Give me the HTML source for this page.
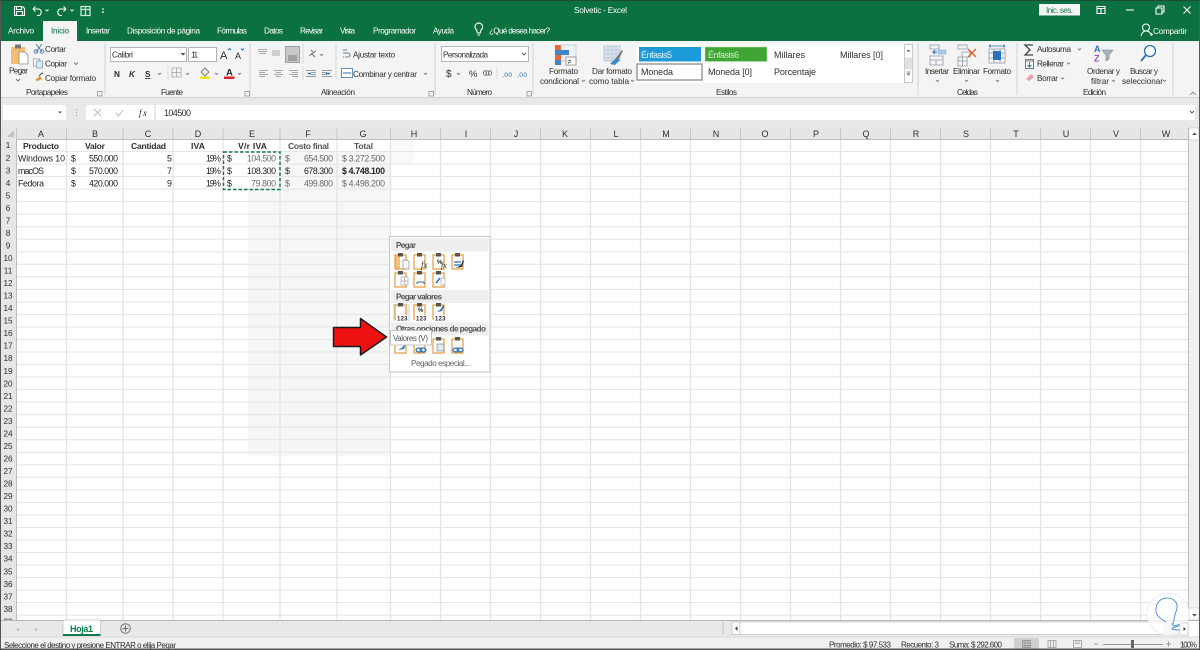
<!DOCTYPE html>
<html lang="es"><head><meta charset="utf-8"><title>Solvetic - Excel</title>
<style>
html,body{margin:0;padding:0;background:#fff;width:1200px;height:650px;overflow:hidden}
svg{display:block;filter:blur(.3px)}
text{font-family:"Liberation Sans",sans-serif;font-size:8.2px;fill:#2e2e2e}
.w text,text.w{fill:#fff}
.c text{font-size:8.8px;fill:#222}
.mid text{text-anchor:middle}
</style></head><body>
<svg width="1200" height="650" viewBox="0 0 1200 650" xmlns="http://www.w3.org/2000/svg">
<defs>
<g id="cb"><rect x="-6" y="-7" width="11" height="14" fill="#fff" stroke="#e39a3b" stroke-width="1.2"/><rect x="-3" y="-9" width="5" height="3.5" fill="#555"/></g>
<g id="cbf"><rect x="-6" y="-7" width="5" height="14" fill="#f5c27e"/><rect x="-6" y="-7" width="11" height="14" fill="none" stroke="#e39a3b" stroke-width="1.2"/><rect x="-3" y="-9" width="5" height="3.5" fill="#555"/></g>
</defs>

<!-- base -->
<rect width="1200" height="650" fill="#fff"/>

<!-- title bar -->
<rect width="1200" height="41" fill="#0b7140"/>
<rect width="1200" height="1" fill="#1e4a36"/>
<g fill="none" stroke="#fff" stroke-width="1.1">
<path d="M14.5 6.5h8l2 2v7h-10zM16.5 6.5v3h5v-3M16.5 15.5v-4h6v4"/>
<path d="M33 9h6a3.5 3.5 0 0 1 0 6.5h-2M33 9l2.500-2.500M33 9l2.500 2.500"/>
<path d="M66 9h-6a3.500 3.500 0 0 0 0 6.500h2M66 9l-2.500-2.500M66 9l-2.500 2.500"/>
<path d="M81 6.500h9v9h-9zM81 9.500h9M85.500 6.500v9" stroke="#cfe7da" stroke-width="1.3"/>
<path d="M45.500 9.500l1.500 1.500 1.500-1.500M70.500 9.500l1.500 1.500 1.500-1.500M102 9h2" stroke-width=".9"/>
<path d="M102 11.500l1 1 1-1" stroke-width=".9"/>
<path d="M1097 6.500h8v7h-8zM1097 8.500h8M1101 8.500v5"/>
<path d="M1126 10h8"/>
<path d="M1156 8h6v6h-6zM1158 8v-2h6v6h-2"/>
<path d="M1183.500 6.500l7 7M1190.500 6.500l-7 7"/>
<circle cx="1146" cy="27.500" r="3.500"/>
<path d="M1141 36c.5-3 2.500-5 5-5s4 1.500 5 3M1150 34.500h3M1151.500 33v3"/>
<path d="M475 27a3.800 3.800 0 1 1 6 3l-.8 3h-2.800l-.8-3a4 4 0 0 1-1.600-3zM477.500 35h2.500"/>
</g>
<text class="w" x="574" y="13" textLength="53">Solvetic  -  Excel</text>
<rect x="1039" y="4" width="41" height="11.500" fill="#f4f6f5"/>
<text x="1046" y="13" textLength="27" style="fill:#2c7a55">Inic. ses.</text>
<text class="w" x="1153" y="34" textLength="34">Compartir</text>

<!-- tabs -->
<rect x="43" y="21" width="34" height="20" fill="#f4f4f4"/>
<g class="w">
<text x="8" y="33.500" textLength="26">Archivo</text>
<text x="86" y="33.500" textLength="24">Insertar</text>
<text x="127" y="33.500" textLength="73">Disposición de página</text>
<text x="217" y="33.500" textLength="30">Fórmulas</text>
<text x="264" y="33.500" textLength="19">Datos</text>
<text x="300" y="33.500" textLength="23">Revisar</text>
<text x="340" y="33.500" textLength="15">Vista</text>
<text x="373" y="33.500" textLength="43">Programador</text>
<text x="433" y="33.500" textLength="21">Ayuda</text>
<text x="489" y="33.500" textLength="61">¿Qué desea hacer?</text>
</g>
<text x="51" y="33.500" textLength="18" style="fill:#0b7140">Inicio</text>

<!-- ribbon -->
<rect y="41" width="1200" height="57" fill="#f4f4f4"/>
<rect y="97" width="1200" height="1" fill="#d4d4d4"/>
<path d="M105 43v52M250 43v52M435 43v52M533 43v52M918 43v52M1017 43v52M1173 43v52" stroke="#d2d2d2" stroke-width="1" fill="none"/>

<!-- clipboard group -->
<rect x="11" y="47" width="14" height="17" fill="#f5bd72"/><rect x="15" y="44.500" width="6" height="4" fill="#777"/>
<path d="M19 52h6l3 3v9h-9z" fill="#fff" stroke="#888" stroke-width=".8"/>
<text x="9" y="73.500" textLength="19">Pegar</text>
<path d="M16 79l2 2 2-2" fill="none" stroke="#555" stroke-width=".8"/>
<path d="M36 44l6 8M42 44l-6 8" stroke="#5a7a9a" stroke-width="1"/><circle cx="36" cy="51.500" r="1.800" fill="none" stroke="#5a8ab5"/><circle cx="42" cy="51.500" r="1.800" fill="none" stroke="#5a8ab5"/>
<rect x="33.500" y="59" width="6" height="7" fill="#fff" stroke="#88a" stroke-width=".7"/><rect x="36.500" y="61" width="6" height="7" fill="#dce8f2" stroke="#79a" stroke-width=".7"/>
<path d="M35 80l5-4 2 3-4 2z" fill="#d99a3a"/><path d="M39 76l3-3 1 1" stroke="#555" fill="none"/>
<text x="45" y="52" textLength="21">Cortar</text>
<text x="45" y="66.500" textLength="22">Copiar</text>
<text x="45" y="81" textLength="51">Copiar formato</text>
<path d="M74 62.500l2 2 2-2" fill="none" stroke="#555" stroke-width=".8"/>
<text x="26" y="95" textLength="42">Portapapeles</text>

<!-- font group -->
<rect x="110.500" y="47.500" width="76" height="14" fill="#fff" stroke="#b5b5b5"/>
<text x="112" y="57.500" textLength="21">Calibri</text>
<path d="M181 53l2 2 2-2M210 53l2 2 2-2" fill="#555" stroke="#555" stroke-width=".8"/>
<rect x="188.500" y="47.500" width="28" height="14" fill="#fff" stroke="#b5b5b5"/>
<text x="191" y="57.500" textLength="7">11</text>
<text x="220" y="59" style="font-size:11px" textLength="8">A</text>
<text x="235" y="59" style="font-size:9px" textLength="6">A</text>
<path d="M228 50l1.500-1.500 1.500 1.500M241 48.500l1.500 1.500 1.500-1.500" stroke="#2a6fb0" fill="none"/>
<text x="114" y="77" textLength="6" style="font-weight:bold">N</text>
<text x="129" y="77" textLength="5" style="font-weight:bold;font-style:italic">K</text>
<text x="145" y="77" textLength="5" style="font-weight:bold;text-decoration:underline">S</text>
<rect x="172" y="68" width="9" height="9" fill="none" stroke="#b4b4b4"/><path d="M172 72.500h9M176.500 68v9" stroke="#b4b4b4"/>
<path d="M158 73l1.500 1.500 1.500-1.500M186 73l1.500 1.500 1.500-1.500M215 73l1.500 1.500 1.500-1.500M238 73l1.500 1.500 1.500-1.500" fill="none" stroke="#666" stroke-width=".8"/>
<path d="M201 72l4-4 4 4-4 4z" fill="#eee" stroke="#667" stroke-width=".8"/>
<rect x="200" y="76.500" width="10" height="2.500" fill="#f5e21a"/>
<text x="226" y="75.500" style="font-size:9.500px;font-weight:bold" textLength="7">A</text>
<rect x="224" y="76.500" width="10.500" height="2.500" fill="#d8232a"/>
<path d="M168 66v14" stroke="#dcdcdc"/>
<text x="161" y="95" textLength="22">Fuente</text>

<!-- alignment -->
<g stroke="#a8a8a8" stroke-width="1" fill="none">
<path d="M258 49.500h9M258 51.500h9M259 53.500h7M272 51h8M272 53h8M272 55h8"/>
<path d="M259 70.500h9M259 72.500h6M259 74.500h9M259 76.500h6M274 70.500h9M276 72.500h5M274 74.500h9M276 76.500h5M289 70.500h9M292 72.500h6M289 74.500h9M292 76.500h6"/>
</g>
<rect x="285.500" y="46.500" width="14" height="16" fill="#c8c8c8" stroke="#a0a0a0"/>
<path d="M288 56h9M288 58h9M288 60h9" stroke="#777" fill="none"/>
<path d="M303 44v20M303 66v14" stroke="#d8d8d8"/>
<path d="M309 56l7-5M311 50l3 3M311 53l4 4" stroke="#777" fill="none"/>
<path d="M320 54l1.500 1.500 1.500-1.500M424 73l1.500 1.500 1.500-1.500" fill="none" stroke="#666" stroke-width=".8"/>
<path d="M306 70.500h10M311 72.500h5M311 74.500h5M306 76.500h10M322 70.500h10M322 72.500h5M322 74.500h5M322 76.500h10" stroke="#9a9a9a" fill="none"/>
<path d="M311 73.500h-3M326 73.500h4" stroke="#2a6fb0" stroke-width="1.500" fill="none"/>
<path d="M336 44v36" stroke="#d8d8d8"/>
<path d="M343 50h4M343 53h5a2 2 0 0 1 0 4h-3M343 57h1" stroke="#6a7f95" fill="none"/>
<text x="353" y="57.500" textLength="42">Ajustar texto</text>
<rect x="341.500" y="68.500" width="11" height="9" fill="#fff" stroke="#6a8fb0"/><path d="M343 73h8" stroke="#2a6fb0"/>
<text x="353" y="77" textLength="64">Combinar y centrar</text>
<text x="321" y="95" textLength="34">Alineación</text>

<!-- dialog launchers -->
<g fill="none" stroke="#8a8a8a" stroke-width=".7">
<path d="M97.500 91.500h4.500v4.500h-4.500zM245 91.500h4.500v4.500h-4.500zM429 91.500h4.500v4.500h-4.500zM527 91.500h4.500v4.500h-4.500z"/>
</g>

<!-- number -->
<rect x="441.500" y="46.500" width="87" height="15" fill="#fff" stroke="#b5b5b5"/>
<text x="443" y="57.500" textLength="45">Personalizada</text>
<path d="M522 53l2 2 2-2" fill="none" stroke="#555" stroke-width=".9"/>
<text x="446" y="77" style="font-size:10px" textLength="6">$</text>
<path d="M457 73l1.500 1.500 1.500-1.500" fill="none" stroke="#666" stroke-width=".8"/>
<text x="469" y="77" style="font-size:9.500px" textLength="9">%</text>
<text x="483" y="75.500" style="font-size:7px" textLength="9">000</text>
<path d="M497 67v12" stroke="#d8d8d8"/>
<text x="502" y="77" style="font-size:6.500px;fill:#2a6fb0" textLength="10">,00</text>
<text x="517" y="77" style="font-size:6.500px;fill:#2a6fb0" textLength="10">,00</text>
<text x="467" y="95" textLength="25">Número</text>

<!-- styles -->
<rect x="555" y="45" width="6" height="5" fill="#e8663c"/><rect x="561" y="45" width="15" height="16" fill="#eef1f4" stroke="#b5bcc4" stroke-width=".6"/>
<rect x="555" y="50" width="6" height="5" fill="#3f86c6"/><rect x="561" y="50" width="8" height="5" fill="#3f86c6"/><rect x="555" y="55" width="6" height="5" fill="#e8663c"/><rect x="555" y="60" width="6" height="5" fill="#3f86c6"/>
<rect x="566" y="57" width="10" height="8" fill="#fff" stroke="#777" stroke-width=".7"/>
<text x="567.500" y="64" style="font-size:7px" textLength="6">≠</text>
<rect x="604" y="46" width="16" height="15" fill="#dbe5f1" stroke="#a8b4c2" stroke-width=".7"/>
<path d="M604 50h16M604 54h16M604 58h16M608 46v15M612 46v15M616 46v15" stroke="#a8b4c2" stroke-width=".5"/>
<path d="M610 64l6-6 4 2-5 5z" fill="#3f86c6"/><path d="M616 58l6-8 1 1-5 9z" fill="#777"/>
<text x="549" y="74" textLength="29">Formato</text>
<text x="540" y="84" textLength="39">condicional</text>
<text x="592" y="74" textLength="40">Dar formato</text>
<text x="589" y="84" textLength="40">como tabla</text>
<path d="M582 80l1.500 1.500 1.500-1.500M631 80l1.500 1.500 1.500-1.500" fill="none" stroke="#666" stroke-width=".8"/>
<rect x="636" y="44" width="268" height="39" fill="#fff"/>
<rect x="639" y="47" width="62" height="14.500" fill="#1c9bd8"/>
<text x="641" y="58" textLength="31" style="fill:#e6f4fb;font-size:9px">Énfasis5</text>
<rect x="705" y="47" width="62" height="14.500" fill="#3fa535" stroke="#b8dcb2" stroke-width=".6"/>
<text x="708" y="58" textLength="31" style="fill:#d3ecd0;font-size:9px">Énfasis6</text>
<rect x="637" y="64" width="65" height="16" fill="#fff" stroke="#9c9c9c" stroke-width="1.500"/>
<text x="641" y="75" textLength="32" style="font-size:9px">Moneda</text>
<text x="708" y="75" textLength="44" style="font-size:9px">Moneda [0]</text>
<text x="774" y="58" textLength="31" style="font-size:9px">Millares</text>
<text x="774" y="75" textLength="42" style="font-size:9px">Porcentaje</text>
<text x="840" y="58" textLength="43" style="font-size:9px">Millares [0]</text>
<rect x="904.500" y="44.500" width="8" height="38" fill="#fff" stroke="#c8c8c8"/>
<rect x="905" y="57.500" width="7" height="12" fill="#e0e0e0"/>
<path d="M906.500 51.500l2-2 2 2zM906.500 73.500h4l-2 2z" fill="#555"/><path d="M906.500 72h4" stroke="#555" stroke-width=".7"/>
<text x="716" y="95" textLength="21">Estilos</text>

<!-- cells -->
<g fill="none" stroke="#8a99a8" stroke-width=".8">
<path d="M930 45h9v4h-9zM930 56h13v4h-13zM936 60v5M930 60v5h13v-5"/>
<path d="M958 45h9v4h-9zM962 52h8v5h-8zM958 57h9v4h-9zM958 61v5h9v-5M962.500 57v9"/>
<path d="M989 49h16v14h-16zM989 53h16M989 58h16M994 49v14M1000 49v14"/>
</g>
<path d="M937 52h-4l2-2M933 52l2 2" stroke="#2a6fb0" fill="none"/><rect x="938" y="50" width="8" height="4" fill="#aecbe6" stroke="#7ea3c5" stroke-width=".5"/>
<path d="M968 49l8 8M976 49l-8 8" stroke="#e8562a" stroke-width="1.300"/>
<rect x="993" y="51" width="8" height="9" fill="#2a72b8"/>
<path d="M989 46h16M989 46l1.500-1.500M989 46l1.500 1.500M1005 46l-1.500-1.500M1005 46l-1.500 1.500" stroke="#2a6fb0" fill="none" stroke-width=".8"/>
<text x="925" y="74" textLength="24">Insertar</text>
<text x="953" y="74" textLength="27">Eliminar</text>
<text x="983" y="74" textLength="28">Formato</text>
<path d="M936 80l1.500 1.500 1.500-1.500M965 80l1.500 1.500 1.500-1.500M996 80l1.500 1.500 1.500-1.500" fill="none" stroke="#666" stroke-width=".8"/>
<text x="957" y="95" textLength="21">Celdas</text>

<!-- edit -->
<path d="M1033 45h-8l5 5-5 5h8" fill="none" stroke="#444" stroke-width="1.300"/>
<rect x="1025.500" y="59.500" width="8" height="9" fill="#fff" stroke="#777"/><path d="M1025 61h9" stroke="#777"/><path d="M1029.500 62v5M1027.500 65l2 2 2-2" stroke="#2a6fb0" fill="none"/>
<path d="M1026 79l5-5 3 3-5 4z" fill="#f09aa8"/>
<text x="1037" y="52" textLength="34">Autosuma</text>
<text x="1037" y="66.500" textLength="27">Rellenar</text>
<text x="1037" y="81" textLength="21">Borrar</text>
<path d="M1078 48.500l1.500 1.500 1.500-1.500M1067 62.500l1.500 1.500 1.500-1.500M1061 77.500l1.500 1.500 1.500-1.500" fill="none" stroke="#666" stroke-width=".8"/>
<text x="1094" y="52" style="font-size:9px;fill:#2a72b8;font-weight:bold" textLength="7">A</text>
<text x="1094" y="61.500" style="font-size:9px;fill:#9c4fc0;font-weight:bold" textLength="7">Z</text>
<path d="M1102 50h11l-4 5v4l-3 2v-6z" fill="#a9b4bd" stroke="#7a8792" stroke-width=".6"/>
<circle cx="1150" cy="51" r="5.500" fill="#fff" stroke="#2a72b8" stroke-width="1.300"/><path d="M1146 55l-5 6" stroke="#2a72b8" stroke-width="1.800"/>
<text x="1087" y="74" textLength="33">Ordenar y</text>
<text x="1091" y="84" textLength="18">filtrar</text>
<text x="1130" y="74" textLength="28">Buscar y</text>
<text x="1122" y="84" textLength="41">seleccionar</text>
<path d="M1112 80l1.500 1.500 1.500-1.500M1163 80l1.500 1.500 1.500-1.500" fill="none" stroke="#666" stroke-width=".8"/>
<text x="1083" y="95" textLength="23">Edición</text>
<path d="M1190 95l3-3 3 3" fill="none" stroke="#777" stroke-width=".8"/>

<!-- formula bar -->
<rect y="98" width="1200" height="30" fill="#e8e8e8"/>
<rect x="3" y="105" width="63" height="15" fill="#fff"/>
<path d="M58 111.500l2 2 2-2z" fill="#555"/>
<path d="M76.500 109v1M76.500 112v1M76.500 115v1" stroke="#999"/>
<rect x="86" y="105" width="68" height="15" fill="#fff"/>
<path d="M94 109l7 7M101 109l-7 7" stroke="#bbb"/>
<path d="M116 113l2.500 3 4.500-6" fill="none" stroke="#bbb"/>
<text x="139" y="116" style="font-family:'Liberation Serif',serif;font-style:italic;font-size:9px" textLength="8">fx</text>
<rect x="156" y="105" width="1039" height="15" fill="#fff"/>
<text x="164" y="116" textLength="27" style="font-size:9px">104500</text>
<path d="M1190 111l2 2 2-2" fill="none" stroke="#555"/>

<!-- sheet -->
<rect x="0" y="128" width="1188" height="11" fill="#e6e6e6"/>
<rect x="0" y="128" width="16" height="492" fill="#e6e6e6"/>
<path d="M14 130v7h-7z" fill="#c2c2c2"/>
<!-- paste preview shade -->
<rect x="248" y="190" width="142" height="266" fill="#f5f7f7"/>
<rect x="280" y="151" width="110" height="40" fill="#f5f7f7"/>
<rect x="390" y="139" width="24" height="25" fill="#f8f9f9"/>
<!-- grid -->
<path fill="none" stroke="#e6e6e6" stroke-width="1.100" d="M16 151.500H1188M16 164.100H1188M16 176.600H1188M16 189.100H1188M16 201.600H1188M16 214.200H1188M16 226.700H1188M16 239.200H1188M16 251.800H1188M16 264.300H1188M16 276.800H1188M16 289.400H1188M16 301.900H1188M16 314.400H1188M16 326.900H1188M16 339.500H1188M16 352H1188M16 364.500H1188M16 377.100H1188M16 389.600H1188M16 402.100H1188M16 414.700H1188M16 427.200H1188M16 439.700H1188M16 452.300H1188M16 464.800H1188M16 477.300H1188M16 489.800H1188M16 502.400H1188M16 514.900H1188M16 527.400H1188M16 540H1188M16 552.500H1188M16 565H1188M16 577.600H1188M16 590.100H1188M16 602.600H1188M16 615.200H1188"/>
<path fill="none" stroke="#e4e4e4" stroke-width="1.300" d="M66.500 139V620M123 139V620M173 139V620M223 139V620M280 139V620M337 139V620M390.500 139V620M440.500 139V620M490.500 139V620M540.500 139V620M590.500 139V620M640.500 139V620M690.500 139V620M740.500 139V620M790.500 139V620M840.500 139V620M890.500 139V620M940.500 139V620M990.500 139V620M1040.500 139V620M1090.500 139V620M1140.500 139V620"/>
<path fill="none" stroke="#c6c6c6" d="M16.500 128V139M66.500 128V139M123 128V139M173 128V139M223 128V139M280 128V139M337 128V139M390.500 128V139M440.500 128V139M490.500 128V139M540.500 128V139M590.500 128V139M640.500 128V139M690.500 128V139M740.500 128V139M790.500 128V139M840.500 128V139M890.500 128V139M940.500 128V139M990.500 128V139M1040.500 128V139M1090.500 128V139M1140.500 128V139"/>
<path d="M16 139.500H1188M16.500 139V620M1188.500 128V620" stroke="#bdbdbd" fill="none"/>

<!-- col headers -->
<g class="mid">
<text x="41" y="137" style="font-size:9px">A</text><text x="95" y="137" style="font-size:9px">B</text><text x="148" y="137" style="font-size:9px">C</text><text x="198" y="137" style="font-size:9px">D</text><text x="252" y="137" style="font-size:9px">E</text><text x="308" y="137" style="font-size:9px">F</text><text x="363" y="137" style="font-size:9px">G</text><text x="414" y="137" style="font-size:9px">H</text><text x="466" y="137" style="font-size:9px">I</text><text x="516" y="137" style="font-size:9px">J</text><text x="565" y="137" style="font-size:9px">K</text><text x="616" y="137" style="font-size:9px">L</text><text x="666" y="137" style="font-size:9px">M</text><text x="716" y="137" style="font-size:9px">N</text><text x="765" y="137" style="font-size:9px">O</text><text x="816" y="137" style="font-size:9px">P</text><text x="866" y="137" style="font-size:9px">Q</text><text x="916" y="137" style="font-size:9px">R</text><text x="966" y="137" style="font-size:9px">S</text><text x="1016" y="137" style="font-size:9px">T</text><text x="1066" y="137" style="font-size:9px">U</text><text x="1116" y="137" style="font-size:9px">V</text><text x="1166" y="137" style="font-size:9px">W</text>
</g>
<!-- row headers -->
<g class="mid">
<text x="8" y="148.200">1</text><text x="8" y="160.800">2</text><text x="8" y="173.300">3</text><text x="8" y="185.800">4</text><text x="8" y="198.300">5</text><text x="8" y="210.900">6</text><text x="8" y="223.400">7</text><text x="8" y="235.900">8</text><text x="8" y="248.500">9</text><text x="8" y="261">10</text><text x="8" y="273.500">11</text><text x="8" y="286.100">12</text><text x="8" y="298.600">13</text><text x="8" y="311.100">14</text><text x="8" y="323.600">15</text><text x="8" y="336.200">16</text><text x="8" y="348.700">17</text><text x="8" y="361.200">18</text><text x="8" y="373.800">19</text><text x="8" y="386.300">20</text><text x="8" y="398.800">21</text><text x="8" y="411.400">22</text><text x="8" y="423.900">23</text><text x="8" y="436.400">24</text><text x="8" y="449">25</text><text x="8" y="461.500">26</text><text x="8" y="474">27</text><text x="8" y="486.500">28</text><text x="8" y="499.100">29</text><text x="8" y="511.600">30</text><text x="8" y="524.100">31</text><text x="8" y="536.700">32</text><text x="8" y="549.200">33</text><text x="8" y="561.700">34</text><text x="8" y="574.300">35</text><text x="8" y="586.800">36</text><text x="8" y="599.300">37</text><text x="8" y="611.900">38</text><text x="8" y="624.400">39</text>
</g>

<!-- data -->
<text x="23" y="149" textLength="36" style="font-size:8.6px;font-weight:bold">Producto</text>
<text x="85" y="149" textLength="20" style="font-size:8.6px;font-weight:bold">Valor</text>
<text x="131" y="149" textLength="35" style="font-size:8.6px;font-weight:bold">Cantidad</text>
<text x="191" y="149" textLength="14" style="font-size:8.6px;font-weight:bold">IVA</text>
<text x="238" y="149" textLength="29" style="font-size:8.6px;font-weight:bold">V/r IVA</text>
<text x="288" y="149" textLength="41" style="font-size:8.6px;font-weight:bold;fill:#555">Costo final</text>
<text x="354" y="149" textLength="19" style="font-size:8.6px;font-weight:bold;fill:#555">Total</text>
<g class="c">
<text x="18" y="161.500" textLength="47">Windows 10</text><text x="71" y="161.500">$</text><text x="89" y="161.500" textLength="29">550.000</text><text x="167" y="161.500">5</text><text x="206" y="161.500" textLength="15">19%</text><text x="227" y="161.500">$</text>
<text x="18" y="174" textLength="26">macOS</text><text x="71" y="174">$</text><text x="89" y="174" textLength="29">570.000</text><text x="167" y="174">7</text><text x="206" y="174" textLength="15">19%</text><text x="227" y="174">$</text>
<text x="18" y="186.500" textLength="26">Fedora</text><text x="71" y="186.500">$</text><text x="89" y="186.500" textLength="29">420.000</text><text x="167" y="186.500">9</text><text x="206" y="186.500" textLength="15">19%</text><text x="227" y="186.500">$</text>
<text x="247" y="174" textLength="29">108.300</text><text x="285" y="174">$</text><text x="304" y="174" textLength="29">678.300</text><text x="342" y="174" textLength="43" style="font-weight:bold">$ 4.748.100</text>
</g>
<g class="c" style="opacity:.68">
<text x="247" y="161.500" textLength="29">104.500</text><text x="285" y="161.500">$</text><text x="304" y="161.500" textLength="29">654.500</text><text x="342" y="161.500" textLength="43">$ 3.272.500</text>
<text x="251" y="186.500" textLength="25">79.800</text><text x="285" y="186.500">$</text><text x="304" y="186.500" textLength="29">499.800</text><text x="342" y="186.500" textLength="43">$ 4.498.200</text>
</g>
<rect x="223.500" y="152" width="56.500" height="37.500" fill="none" stroke="#1a7a4c" stroke-width="1.500" stroke-dasharray="3.500 2"/>

<!-- vertical scrollbar -->
<rect x="1189" y="128" width="10" height="492" fill="#f0f0f0"/>
<rect x="1189" y="128" width="10" height="12" fill="#fff" stroke="#c0c0c0" stroke-width=".6"/>
<rect x="1189" y="608" width="10" height="12" fill="#fff" stroke="#c0c0c0" stroke-width=".6"/>
<path d="M1192 135l2.500-2.500 2.500 2.500zM1192 614h5l-2.500 2.500z" fill="#555"/>

<!-- tab bar -->
<rect y="620" width="1189" height="17" fill="#e8e8e8"/>
<rect y="620" width="1200" height="1" fill="#b5b5b5"/>
<rect x="63" y="620" width="37.500" height="15.500" fill="#fff" stroke="#b5b5b5" stroke-width=".6"/>
<rect x="63" y="634" width="37.500" height="2" fill="#0b7d4b"/>
<text x="70" y="632" textLength="23" style="font-weight:bold;font-size:9px;fill:#0b7d4b">Hoja1</text>
<path d="M19 628l-2 1.500 2 1.500M35 628l2 1.500-2 1.500" fill="#bbb" stroke="#bbb" stroke-width=".6"/>
<circle cx="125.500" cy="628.500" r="4.800" fill="none" stroke="#777"/><path d="M122.500 628.500h6M125.500 625.500v6" stroke="#666"/>
<rect x="722" y="622" width="2" height="12" fill="#d5d5d5"/>
<rect x="732" y="622" width="8" height="12.500" fill="#fff" stroke="#bdbdbd" stroke-width=".7"/>
<path d="M737.500 626v5l-2.500-2.500z" fill="#444"/>
<rect x="740" y="622" width="424" height="12.500" fill="#fff" stroke="#c4c4c4" stroke-width=".7"/>

<!-- status -->
<rect y="637" width="1200" height="11.500" fill="#f0f0f0"/>
<rect y="636.500" width="1200" height="1" fill="#dadada"/>
<text x="4" y="648" textLength="172" style="font-size:8px">Seleccione el destino y presione ENTRAR o elija Pegar</text>
<text x="829" y="647.500" textLength="62" style="font-size:8px">Promedio:  $ 97.533</text>
<text x="901" y="647.500" textLength="38" style="font-size:8px">Recuento: 3</text>
<text x="949" y="647.500" textLength="53" style="font-size:8px">Suma:  $ 292.600</text>
<rect x="1014" y="638" width="25" height="11" fill="#d0d0d0"/>
<path d="M1022.500 640.500h8v7h-8zM1022.500 643h8M1022.500 645.500h8M1025 640.500v7M1028 640.500v7" fill="none" stroke="#888" stroke-width=".7"/>
<path d="M1048 640.500h8v7h-8zM1050.500 640.500v7M1053.500 640.500v7M1073.500 640.500h8v7h-8zM1076 640.500v3h3v-3" fill="none" stroke="#999" stroke-width=".8"/>
<path d="M1094 644h4M1103 644.500h60M1166 644h5M1168.500 641.500v5" stroke="#999" fill="none"/>
<rect x="1131" y="640" width="3" height="8" fill="#666"/>
<text x="1180" y="647.500" textLength="17" style="font-size:8px">100%</text>

<!-- doodle, on top of the grid and scrollbars -->
<circle cx="1168" cy="614" r="21" fill="#fff" fill-opacity=".75" stroke="#e9eff5"/>
<path d="M1166 622c-5-3-11-6-10-14 1-7 6-10 11-10 7 0 11 5 10 10-1 5-3 8-3 12-1 3 0 4-2 4l2 2c3-1 5-2 6-1-2 2-8 2-8 4 2 1 6 1 9 1" fill="none" stroke="#5a95c8" stroke-width="1"/>
<rect x="1180" y="623" width="8" height="12" fill="#fff" stroke="#c8c8c8" stroke-width=".6"/>
<path d="M1183.500 627v4l2.500-2z" fill="#444"/>

<!-- frame -->
<rect y="648.500" width="1200" height="1.500" fill="#555"/>
<rect width="1" height="650" fill="#555"/>
<rect x="1199" width="1" height="650" fill="#555"/>

<!-- context menu -->
<rect x="389.500" y="236.500" width="100.500" height="135.500" fill="#fff" stroke="#c6c6c6"/>
<rect x="391" y="238.500" width="97.500" height="13" fill="#eeeeee"/>
<text x="396" y="248" textLength="20" style="font-weight:bold;fill:#555">Pegar</text>
<rect x="391" y="290" width="97.500" height="13" fill="#eeeeee"/>
<text x="396" y="299.500" textLength="46" style="font-weight:bold;fill:#555">Pegar valores</text>
<rect x="391" y="322.500" width="97.500" height="13" fill="#eeeeee"/>
<text x="396" y="331.500" textLength="90" style="font-weight:bold;fill:#555">Otras opciones de pegado</text>

<use href="#cbf" x="401" y="262"/><path d="M403 260h4l2 2v7h-6z" fill="#fff" stroke="#888" stroke-width=".7"/>
<use href="#cb" x="420" y="262"/><text x="421" y="268" style="font-family:'Liberation Serif',serif;font-style:italic;font-size:9px">fx</text>
<use href="#cb" x="439" y="262"/><text x="437" y="264" style="font-size:6px;font-weight:bold">%</text><text x="441" y="268" style="font-family:'Liberation Serif',serif;font-style:italic;font-size:8px">fx</text>
<use href="#cb" x="458" y="262"/><path d="M454 262h7M454 265h7" stroke="#4a86c0" stroke-width="1.500"/><path d="M456 268l5-3 2-5 1 1-2 6z" fill="#333"/>
<use href="#cb" x="401" y="280"/><path d="M401 277h7v8h-7zM404.500 277v8M401 281h7" fill="#fff" stroke="#aaa" stroke-width=".7"/>
<use href="#cb" x="420" y="280"/><path d="M417 282h7M417 282v2M424 282v2" stroke="#2a6fb0" fill="none"/>
<use href="#cb" x="439" y="280"/><path d="M436 283l4-5" stroke="#2a6fb0" stroke-width="1.500"/><rect x="441" y="278" width="4" height="7" fill="#fff" stroke="#999" stroke-width=".6"/>

<rect x="393" y="304" width="17" height="17" fill="#e7e7e7"/>
<use href="#cb" x="401" y="312"/><use href="#cb" x="420" y="312"/><use href="#cb" x="439" y="312"/>
<text x="418" y="312" style="font-size:6px;font-weight:bold">%</text>
<path d="M437 312l4-3 2-4 1 1-2 5z" fill="#2a6fb0"/>
<rect x="396" y="315" width="12" height="6" fill="#fff"/><rect x="415" y="315" width="12" height="6" fill="#fff"/><rect x="434" y="315" width="12" height="6" fill="#fff"/>
<text x="397" y="320.500" textLength="10.500" style="font-size:6px;font-weight:bold">123</text>
<text x="416" y="320.500" textLength="10.500" style="font-size:6px;font-weight:bold">123</text>
<text x="435" y="320.500" textLength="10.500" style="font-size:6px;font-weight:bold">123</text>

<use href="#cb" x="401" y="346"/><use href="#cb" x="420" y="346"/><use href="#cb" x="439" y="346"/><use href="#cb" x="458" y="346"/>
<path d="M398 350l5-3 2-4 1 1-2 5z" fill="#2a6fb0"/>
<ellipse cx="419" cy="350" rx="3" ry="2" fill="none" stroke="#2a6fb0" stroke-width="1.200"/><ellipse cx="423" cy="350" rx="3" ry="2" fill="none" stroke="#2a6fb0" stroke-width="1.200"/>
<rect x="437" y="344" width="7" height="7" fill="#dfe8f0" stroke="#777" stroke-width=".6"/>
<ellipse cx="456" cy="350" rx="3" ry="2" fill="none" stroke="#2a6fb0" stroke-width="1.200"/><ellipse cx="460" cy="350" rx="3" ry="2" fill="none" stroke="#2a6fb0" stroke-width="1.200"/>
<text x="411" y="366" textLength="59" style="fill:#666">Pegado especial...</text>

<!-- tooltip -->
<rect x="390.500" y="330.500" width="41" height="14.500" fill="#fff" stroke="#c4c4c4"/>
<text x="393" y="341" textLength="35" style="font-size:8px;fill:#555">Valores (V)</text>

<!-- arrow -->
<path d="M333.500 327.500H360.500V318.500L386.500 337L360.500 355V346.500H333.500Z" fill="#ee1111" stroke="#1a1a1a" stroke-width="1.500" stroke-linejoin="round"/>
</svg>
</body></html>
